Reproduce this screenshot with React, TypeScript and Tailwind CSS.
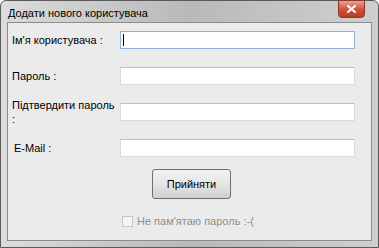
import React from 'react';

const fields = [
  { label: "Ім'я користувача :", focused: true },
  { label: 'Пароль :' },
  { label: 'Підтвердити пароль', wrap: true },
  { label: 'E-Mail :', indent: true },
];

function CloseButton() {
  return (
    <div className="flex h-[18px] w-[27px] items-center justify-center rounded-b-[4px] border border-[#8a3a2a] bg-gradient-to-b from-[#e8a493] via-[#d0533a] to-[#c03a22]">
      <svg width="9" height="8" viewBox="0 0 9 8">
        <path d="M1 1 L8 7 M8 1 L1 7" stroke="#ffffff" strokeWidth="2" strokeLinecap="square" />
      </svg>
    </div>
  );
}

export default function App() {
  return (
    <div className="h-[248px] w-[379px] overflow-hidden bg-white">
      <div
        className="flex h-full w-full flex-col rounded-t-[6px] border border-[#5a5a5a] bg-gradient-to-r from-[#dcdcdc] via-[#b9b9b9] to-[#cfcfcf] px-[6px] pb-[6px]"
        style={{ fontFamily: '"Liberation Sans", Arial, sans-serif' }}
      >
        {/* Title bar */}
        <div className="flex h-[21px] items-start justify-between">
          <span className="pl-[1px] pt-[4px] text-[11px] text-black">
            Додати нового користувача
          </span>
          <div className="mr-[7px] mt-[-1px]">
            <CloseButton />
          </div>
        </div>

        {/* Client area */}
        <div className="flex flex-1 flex-col border border-[#8c8c8c] bg-[#ebebeb] text-[11px] text-black">
          <div className="flex flex-col gap-[18px] pl-[4px] pt-[8px]">
            {fields.map((f) => (
              <div key={f.label} className="flex h-[18px] items-center">
                <div
                  className={`w-[108px] shrink-0 leading-[14px] ${f.indent ? 'pl-[2px]' : ''} ${
                    f.wrap ? '-mt-[5px] self-start' : ''
                  }`}
                >
                  {f.wrap ? (
                    <>
                      {f.label}
                      <br />:
                    </>
                  ) : (
                    f.label
                  )}
                </div>
                <div
                  className={`flex h-[18px] w-[235px] items-center border bg-white ${
                    f.focused ? 'border-[#8fb4d9]' : 'border-[#dadada] border-t-[#bdbdbd]'
                  }`}
                >
                  {f.focused && <div className="ml-[2px] h-[12px] w-[1px] bg-black" />}
                </div>
              </div>
            ))}
          </div>

          <div className="flex justify-center pt-[12px] pl-[4px]">
            <button className="h-[30px] w-[79px] rounded-[3px] border border-[#707070] bg-gradient-to-b from-[#f2f2f2] via-[#e6e6e6] to-[#cfcfcf] text-[11px] text-black">
              Прийняти
            </button>
          </div>

          <div className="flex items-center gap-[4px] pl-[114px] pt-[14px] text-[#8e8e8e]">
            <div className="h-[11px] w-[11px] border border-[#c4c4c4] bg-[#f4f4f4]" />
            <span>Не пам'ятаю пароль :-(</span>
          </div>
        </div>
      </div>
    </div>
  );
}
